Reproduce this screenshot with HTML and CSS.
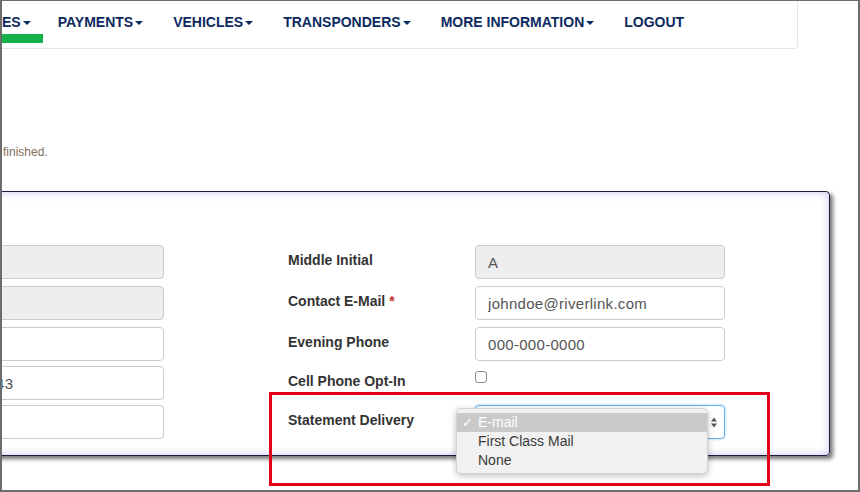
FILE: index.html
```html
<!DOCTYPE html>
<html lang="en">
<head>
    <meta charset="UTF-8">
    <meta name="viewport" content="width=device-width, initial-scale=1">
    <title>Account Profile</title>
    <link rel="stylesheet" href="styles.css">
</head>
<body>

    <!-- top navigation -->
    <nav class="navbar">
        <ul class="nav">
            <li class="active first"><a href="#">ES<span class="caret"></span></a></li>
            <li><a href="#">PAYMENTS<span class="caret"></span></a></li>
            <li><a href="#">VEHICLES<span class="caret"></span></a></li>
            <li><a href="#">TRANSPONDERS<span class="caret"></span></a></li>
            <li><a href="#">MORE INFORMATION<span class="caret"></span></a></li>
            <li><a href="#">LOGOUT</a></li>
        </ul>
    </nav>

    <p class="notice">finished.</p>

    <!-- contact form panel -->
    <section class="panel">
        <div class="form-grid">
            <input class="field readonly" type="text" value="" readonly>
            <label class="label">Middle Initial</label>
            <input class="field readonly" type="text" value="A" readonly>

            <input class="field readonly" type="text" value="" readonly>
            <label class="label">Contact E-Mail <span class="required">*</span></label>
            <input class="field" type="text" value="johndoe@riverlink.com">

            <input class="field" type="text" value="">
            <label class="label">Evening Phone</label>
            <input class="field" type="text" value="000-000-0000">

            <input class="field" type="text" value="43">
            <label class="label">Cell Phone Opt-In</label>
            <div><span class="checkbox"></span></div>

            <input class="field" type="text" value="">
            <label class="label">Statement Delivery</label>
            <div class="select">
                <svg class="select-arrows" width="6" height="11" viewBox="0 0 6 11">
                    <path d="M0 4.5 L3 0.5 L6 4.5 Z M0 6.5 L3 10.5 L6 6.5 Z" fill="#555"/>
                </svg>
                <!-- open option list -->
                <ul class="popup">
                    <li class="picked"><span class="check">&#10003;</span>E-mail</li>
                    <li><span class="check"></span>First Class Mail</li>
                    <li><span class="check"></span>None</li>
                </ul>
            </div>
        </div>
    </section>

    <!-- red annotation box -->
    <div class="highlight-box"></div>

</body>
</html>
```

FILE: styles.css
```css
html {
    background-color: #ffffff;
}

body {
    margin: 0;
    height: 492px;
    box-sizing: border-box;
    border: 2px solid #6d6d6d;
    border-top-width: 1px;
    overflow: hidden;
    position: relative;
    font-family: "Liberation Sans", Arial, sans-serif;
    color: #333333;
}

/* navigation bar */
.navbar {
    margin: 0 60px 0 -20px;
    background-color: #ffffff;
    border: 1px solid #e5e5e5;
    border-top: none;
    border-radius: 0 0 4px 4px;
    padding-bottom: 5px;
}

.nav {
    list-style: none;
    margin: 0;
    padding: 0;
    display: flex;
}

.nav a {
    display: block;
    padding: 11px 15px 2px 15px;
    line-height: 20px;
    font-size: 14px;
    font-weight: bold;
    color: #0b2a60;
    text-decoration: none;
    border-bottom: 9px solid transparent;
}

.nav .first a {
    padding-left: 19px;
    padding-right: 12px;
}

.nav .active a {
    border-bottom-color: #13b148;
}

.caret {
    display: inline-block;
    width: 0;
    height: 0;
    margin-left: 2px;
    vertical-align: middle;
    border-top: 4px solid #0b2a60;
    border-left: 4px solid transparent;
    border-right: 4px solid transparent;
}

.notice {
    margin: 95px 0 0 1px;
    font-size: 12px;
    line-height: 17px;
    color: #85705a;
}

/* form panel */
.panel {
    margin: 30px 28px 0 -20px;
    padding: 53px 0 16px 0;
    border: 1px solid #1b1b3f;
    border-radius: 4px;
    box-shadow: 3px 3px 4px rgba(0, 0, 0, 0.55), inset 0 0 8px rgba(110, 110, 215, 0.4);
}

.form-grid {
    display: grid;
    grid-template-columns: 181px 311px 250px;
    grid-template-rows: 41px 41px 39px 39px 34px;
    align-items: start;
}

.field {
    display: block;
    box-sizing: border-box;
    width: 100%;
    height: 34px;
    margin: 0;
    padding: 0 12px;
    border: 1px solid #cccccc;
    border-radius: 4px;
    background-color: #ffffff;
    font-family: "Liberation Sans", Arial, sans-serif;
    font-size: 15px;
    letter-spacing: 0.3px;
    color: #555555;
    outline: none;
}

.field.readonly {
    background-color: #eeeeee;
}

.label {
    padding: 5px 0 0 124px;
    line-height: 20px;
    font-size: 14px;
    font-weight: bold;
    color: #333333;
}

.required {
    color: #c9302c;
}

.checkbox {
    display: block;
    width: 12px;
    height: 12px;
    box-sizing: border-box;
    margin-top: 5px;
    border: 1px solid #8e8e8e;
    border-radius: 3px;
    background-color: #ffffff;
}

/* select with its open list */
.select {
    position: relative;
    height: 34px;
    box-sizing: border-box;
    border: 1px solid #66afe9;
    border-radius: 4px;
    background-color: #ffffff;
    box-shadow: 0 0 3px rgba(102, 175, 233, 0.6);
}

.select-arrows {
    position: absolute;
    right: 7px;
    top: 11px;
}

.popup {
    position: absolute;
    left: -20px;
    top: 2px;
    width: 252px;
    height: 66px;
    box-sizing: border-box;
    margin: 0;
    padding: 4px 0 3px 0;
    list-style: none;
    background-color: #f1f1f1;
    border: 1px solid #d2d2d2;
    border-radius: 5px;
    box-shadow: 0 2px 6px rgba(0, 0, 0, 0.25);
    font-size: 14px;
    line-height: 19px;
    color: #3a3a3a;
}

.popup li {
    padding-left: 5px;
}

.popup .picked {
    background-color: #c9c9c9;
    color: #ffffff;
}

.check {
    display: inline-block;
    width: 16px;
    font-family: "DejaVu Sans", sans-serif;
    font-size: 13px;
}

/* annotation */
.highlight-box {
    position: absolute;
    left: 267px;
    top: 391px;
    width: 501px;
    height: 94px;
    box-sizing: border-box;
    border: 3px solid #e2001a;
}
```
